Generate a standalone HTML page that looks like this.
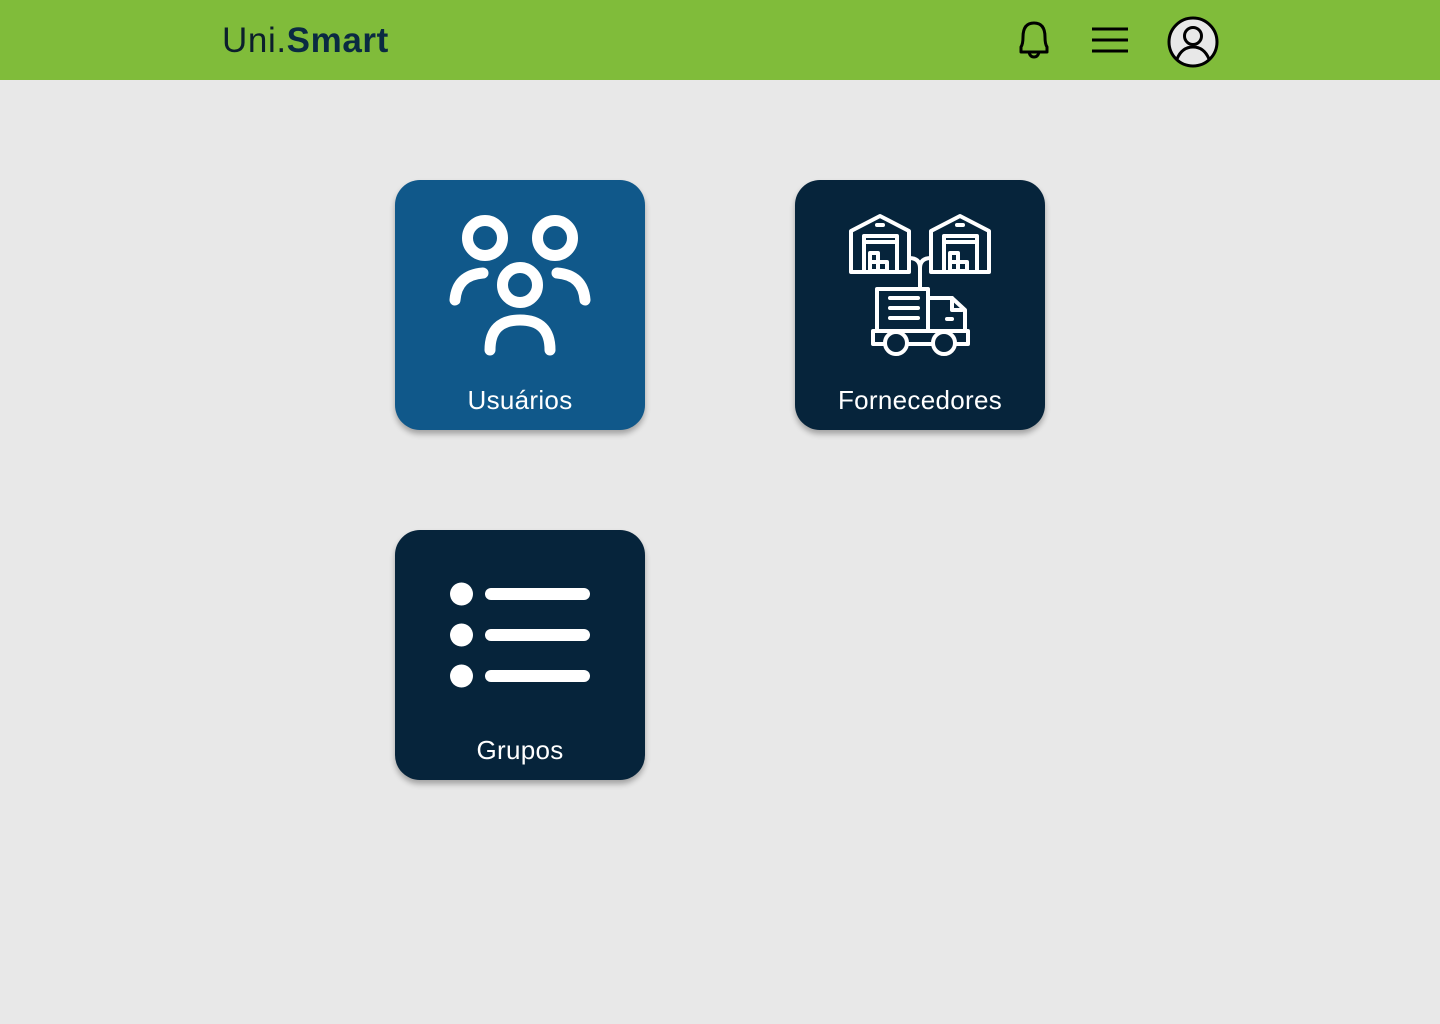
<!DOCTYPE html>
<html><head><meta charset="utf-8"><style>
*{margin:0;padding:0;box-sizing:border-box}
body{width:1440px;height:1024px;background:#e8e8e8;font-family:"Liberation Sans",sans-serif;position:relative;overflow:hidden}
.hdr{position:absolute;left:0;top:0;width:1440px;height:80px;background:#80bc3a}
.logo{position:absolute;left:222px;top:21px;font-size:35px;color:#0c1f2c;letter-spacing:0.6px}
.logo b{color:#0a2a42}
.card{position:absolute;width:250px;height:250px;border-radius:25px;box-shadow:0 4px 6px rgba(0,0,0,.3);color:#fff;text-align:center}
.card span{position:absolute;left:0;right:0;top:205px;font-size:26px;letter-spacing:0.3px}
.card svg{position:absolute;left:45px;top:25px}
</style></head><body>
<div class="hdr">
<div class="logo">Uni.<b>Smart</b></div>
<svg style="position:absolute;left:1010px;top:15px" width="50" height="50" viewBox="0 0 50 50" fill="none" stroke="#000" stroke-width="3" stroke-linejoin="round">
<path d="M11 37 L11 32 Q13 29 13 22 Q13 8 24 8 Q35 8 35 22 Q35 29 37 32 L37 37 Z"/>
<path d="M19 37 Q20 42 24 42 Q28 42 29 37"/>
</svg>
<svg style="position:absolute;left:1090px;top:25px" width="40" height="30"><g stroke="#000" stroke-width="3"><line x1="2" y1="4" x2="38" y2="4"/><line x1="2" y1="15" x2="38" y2="15"/><line x1="2" y1="26" x2="38" y2="26"/></g></svg>
<svg style="position:absolute;left:1166px;top:15px" width="54" height="54" viewBox="0 0 54 54">
<circle cx="27" cy="27" r="24" fill="#e8e8e8" stroke="#000" stroke-width="3"/>
<circle cx="27" cy="21" r="8.5" fill="none" stroke="#000" stroke-width="3"/>
<path d="M11 44 Q16 32 27 32 Q38 32 43 44" fill="none" stroke="#000" stroke-width="3"/>
</svg>
</div>

<div class="card" style="left:395px;top:180px;background:#10588a">
<svg width="160" height="160" viewBox="0 0 160 160" fill="none" stroke="#fff" stroke-width="11" stroke-linecap="round">
<circle cx="45" cy="33" r="17.5"/><circle cx="115" cy="33" r="17.5"/><circle cx="80" cy="80" r="17.5"/>
<path d="M15 95 Q17 70 43 68"/><path d="M145 95 Q143 70 117 68"/>
<path d="M50 145 Q50 115 80 115 Q110 115 110 145"/>
</svg>
<span>Usuários</span></div>

<div class="card" style="left:795px;top:180px;background:#06243b">
<svg width="160" height="160" viewBox="840 205 160 160" style="left:45px;top:25px" fill="none" stroke="#fff" stroke-width="4" stroke-linejoin="round" stroke-linecap="round">
<path d="M851 272 L851 231 L880 216 L909 231 L909 272 Z"/>
<path d="M864 272 L864 236 L897 236 L897 272"/><line x1="864" y1="242" x2="897" y2="242"/>
<rect x="870" y="253" width="8" height="9"/><rect x="870" y="262" width="8" height="9"/><rect x="878" y="262" width="9" height="9"/>
<line x1="877" y1="225" x2="883" y2="225"/>
<path d="M931 272 L931 231 L960 216 L989 231 L989 272 Z"/>
<path d="M944 272 L944 236 L977 236 L977 272"/><line x1="944" y1="242" x2="977" y2="242"/>
<rect x="950" y="253" width="8" height="9"/><rect x="950" y="262" width="8" height="9"/><rect x="958" y="262" width="9" height="9"/>
<line x1="957" y1="225" x2="963" y2="225"/>
<path d="M909 258 Q920 258 920 268 Q920 258 931 258"/><line x1="920" y1="266" x2="920" y2="287"/>
<path d="M877 330 L877 289 L928 289 L928 330"/>
<path d="M928 298 L952 298 L965 310 L965 330"/>
<path d="M952 298 L952 310 L962 310"/>
<line x1="890" y1="298" x2="918" y2="298"/><line x1="890" y1="308" x2="918" y2="308"/><line x1="890" y1="318" x2="918" y2="318"/>
<line x1="947" y1="319" x2="952" y2="319"/>
<path d="M884 344 L873 344 L873 331 L968 331 L968 344 L957 344"/>
<line x1="908" y1="344" x2="932" y2="344"/>
<circle cx="896" cy="343" r="11"/><circle cx="944" cy="343" r="11"/>
</svg>
<span>Fornecedores</span></div>

<div class="card" style="left:395px;top:530px;background:#06243b">
<svg width="160" height="160" viewBox="0 0 160 160" fill="#fff" stroke="none" style="left:45px;top:40px">
<circle cx="21.5" cy="24" r="11.5"/><circle cx="21.5" cy="65" r="11.5"/><circle cx="21.5" cy="106" r="11.5"/>
<g stroke="#fff" stroke-width="12" stroke-linecap="round"><line x1="51" y1="24" x2="144" y2="24"/><line x1="51" y1="65" x2="144" y2="65"/><line x1="51" y1="106" x2="144" y2="106"/></g>
</svg>
<span>Grupos</span></div>
</body></html>
